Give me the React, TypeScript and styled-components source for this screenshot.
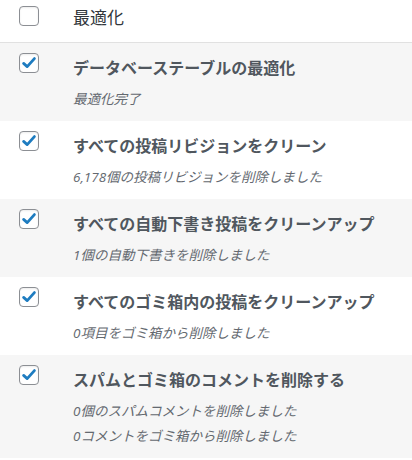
import styled, { createGlobalStyle } from 'styled-components';

const GlobalStyle = createGlobalStyle`
  html, body {
    margin: 0;
    padding: 0;
    background: #fff;
  }
  body {
    font-family: "Open Sans", "Noto Sans CJK JP", sans-serif;
  }
`;

const Table = styled.div`
  width: 412px;
  display: flex;
  flex-direction: column;
`;

const Header = styled.div`
  display: flex;
  align-items: flex-start;
  height: 42px;
  border-bottom: 1px solid #e1e1e1;
  box-sizing: content-box;
  background: #fff;
`;

const Row = styled.div<{ $alt?: boolean }>`
  display: flex;
  align-items: flex-start;
  padding: 10px 0 9px;
  background: ${({ $alt }) => ($alt ? '#f6f6f6' : '#fff')};
`;

const CheckCell = styled.div<{ $top: number }>`
  width: 73px;
  flex-shrink: 0;
  padding-left: 19px;
  padding-top: ${({ $top }) => $top}px;
  box-sizing: border-box;
`;

const Box = styled.span`
  display: flex;
  align-items: center;
  justify-content: center;
  width: 20px;
  height: 20px;
  box-sizing: border-box;
  border: 1px solid #8c8f94;
  border-radius: 4px;
  background: #fff;
  box-shadow: inset 0 1px 2px rgba(0, 0, 0, 0.08);
`;

const HeaderLabel = styled.div`
  font-family: "Open Sans", "Noto Sans CJK JP", sans-serif;
  font-size: 17px;
  line-height: 36px;
  color: #32373c;
`;

const Content = styled.div`
  display: flex;
  flex-direction: column;
`;

const Title = styled.div`
  font-family: "Open Sans", "Noto Sans CJK JP", sans-serif;
  font-size: 16px;
  font-weight: 700;
  line-height: 30px;
  color: #50575e;
`;

const Notes = styled.div`
  margin-top: 4px;
  display: flex;
  flex-direction: column;
`;

const Note = styled.div`
  font-family: "Open Sans", "Noto Sans CJK JP", sans-serif;
  font-size: 13.5px;
  font-style: italic;
  line-height: 25px;
  color: #646970;
`;

const Checkbox = ({ checked }: { checked?: boolean }) => (
  <Box>
    {checked && (
      <svg width="16" height="16" viewBox="0 0 16 16">
        <path d="M2.6 8.4 L6.2 11.6 L13.4 3.6" fill="none" stroke="#1e7cc0" strokeWidth="2.8" strokeLinecap="round" strokeLinejoin="round" />
      </svg>
    )}
  </Box>
);

const items = [
  { title: 'データベーステーブルの最適化', notes: ['最適化完了'] },
  { title: 'すべての投稿リビジョンをクリーン', notes: ['6,178個の投稿リビジョンを削除しました'] },
  { title: 'すべての自動下書き投稿をクリーンアップ', notes: ['1個の自動下書きを削除しました'] },
  { title: 'すべてのゴミ箱内の投稿をクリーンアップ', notes: ['0項目をゴミ箱から削除しました'] },
  {
    title: 'スパムとゴミ箱のコメントを削除する',
    notes: ['0個のスパムコメントを削除しました', '0コメントをゴミ箱から削除しました'],
  },
];

const App = () => {
  return (
    <>
      <GlobalStyle />
      <Table>
        <Header>
          <CheckCell $top={6}>
            <Checkbox />
          </CheckCell>
          <HeaderLabel>最適化</HeaderLabel>
        </Header>
        {items.map((item, i) => (
          <Row key={item.title} $alt={i % 2 === 0}>
            <CheckCell $top={0}>
              <Checkbox checked />
            </CheckCell>
            <Content>
              <Title>{item.title}</Title>
              <Notes>
                {item.notes.map((n) => (
                  <Note key={n}>{n}</Note>
                ))}
              </Notes>
            </Content>
          </Row>
        ))}
      </Table>
    </>
  );
};

export default App;
